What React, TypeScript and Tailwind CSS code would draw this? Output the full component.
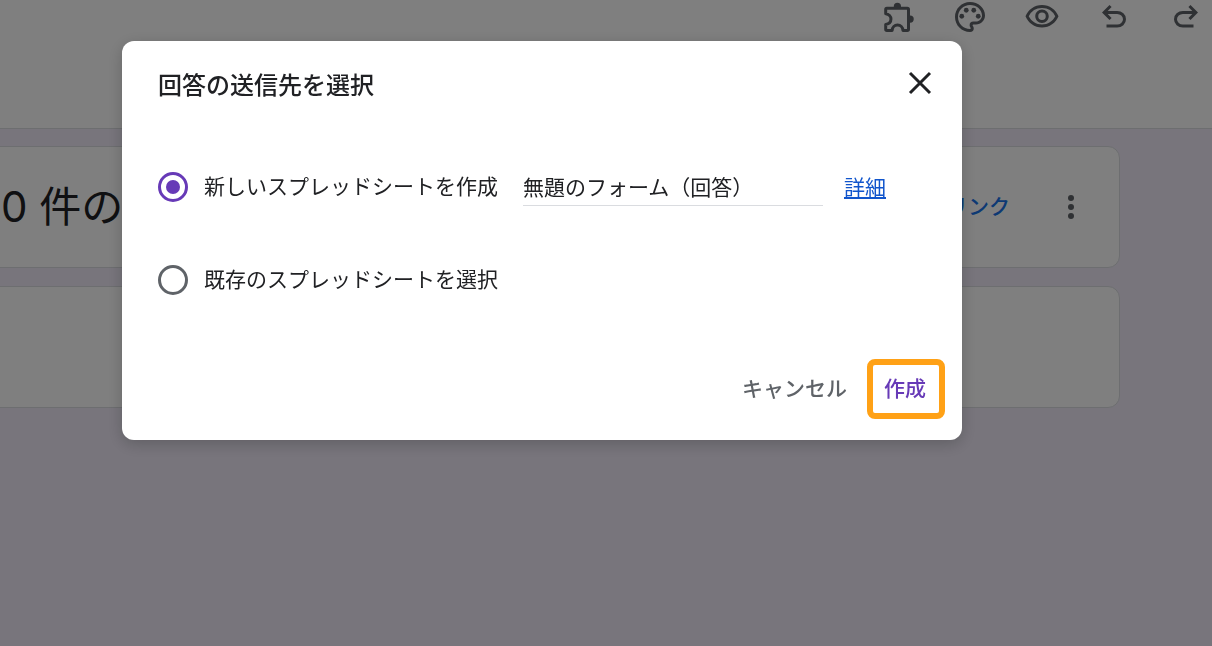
import { useState } from "react";
import type { ReactNode } from "react";
import { MdOutlineVisibility } from "react-icons/md";

export default function App() {
  return (
    <div className="relative min-h-screen overflow-hidden bg-[#f0ebf8] font-['Noto_Sans_CJK_JP',sans-serif] text-[#202124]">
      <Header />
      <main className="-ml-9 mr-[92px] flex flex-col gap-[18px] pt-[17px]">
        <section className="flex h-[122px] items-center rounded-xl border border-[#dadce0] bg-white pl-9 pr-[30px]">
          <h1 className="flex-1 font-[Inter,'Noto_Sans_CJK_JP',sans-serif] text-[42px] leading-[60px]">
            0 件の回答
          </h1>
          <button type="button" className="mr-[43px] pb-1 text-[21px] font-medium leading-8 text-[#1a73e8]">
            リンク
          </button>
          <IconButton label="その他">
            <svg viewBox="0 0 24 24" className="size-9" fill="currentColor">
              <circle cx="12" cy="6" r="2" />
              <circle cx="12" cy="12" r="2" />
              <circle cx="12" cy="18" r="2" />
            </svg>
          </IconButton>
        </section>
        <section className="h-[122px] rounded-xl border border-[#dadce0] bg-white" />
      </main>
      <div className="fixed inset-0 flex items-start justify-center bg-black/50 pr-32 pt-[41px]">
        <DestinationDialog />
      </div>
    </div>
  );
}

function Header() {
  return (
    <header className="h-[129px] border-b border-[#dadce0] bg-white">
      <div className="flex h-[34px] items-center justify-end gap-9 pr-2">
        <IconButton label="アドオン">
          <ExtensionIcon />
        </IconButton>
        <IconButton label="テーマをカスタマイズ">
          <PaletteIcon />
        </IconButton>
        <IconButton label="プレビュー">
          <MdOutlineVisibility className="size-9" />
        </IconButton>
        <IconButton label="元に戻す">
          <UndoIcon className="size-9" />
        </IconButton>
        <IconButton label="やり直す">
          <UndoIcon className="size-9 -scale-x-100" />
        </IconButton>
      </div>
    </header>
  );
}

function DestinationDialog() {
  const [target, setTarget] = useState("new");
  const [name, setName] = useState("無題のフォーム（回答）");

  return (
    <div
      role="dialog"
      aria-modal="true"
      aria-labelledby="dialog-title"
      className="w-full max-w-[840px] rounded-xl bg-white pb-[21px] pt-6 shadow-[0_4px_16px_rgba(0,0,0,0.2)]"
    >
      <div className="flex h-9 items-center justify-between pl-9 pr-6">
        <h2 id="dialog-title" className="pt-0.5 text-2xl font-medium">
          回答の送信先を選択
        </h2>
        <IconButton label="閉じる">
          <svg viewBox="0 0 36 36" className="size-9 text-[#202124]" stroke="currentColor" strokeWidth="3">
            <path d="M8 8l20 20M28 8L8 28" />
          </svg>
        </IconButton>
      </div>

      <div className="mt-[62px] flex h-12 items-center px-9">
        <Option
          value="new"
          label="新しいスプレッドシートを作成"
          checked={target === "new"}
          onChange={setTarget}
        />
        <input
          type="text"
          aria-label="スプレッドシートの名前"
          value={name}
          onChange={(e) => setName(e.target.value)}
          className="ml-[25px] h-[38px] w-[300px] border-b border-[#dadce0] pb-0.5 text-[21px] outline-none"
        />
        <a href="#details" className="ml-[21px] pb-0.5 text-[21px] leading-8 text-[#1155cc] underline">
          詳細
        </a>
      </div>

      <div className="mt-[45px] flex h-12 items-center px-9">
        <Option
          value="existing"
          label="既存のスプレッドシートを選択"
          checked={target === "existing"}
          onChange={setTarget}
        />
      </div>

      <div className="mt-[55px] flex items-center justify-end gap-5 pr-[17px] text-[21px] font-medium">
        <button type="button" className="h-[60px] pb-0.5 text-[#5f6368]">
          キャンセル
        </button>
        <button
          type="button"
          className="h-[60px] w-[78px] rounded-lg border-6 border-[#ffa116] pb-0.5 pr-0.5 text-[#673ab7]"
        >
          作成
        </button>
      </div>
    </div>
  );
}

function Option({
  value,
  label,
  checked,
  onChange,
}: {
  value: string;
  label: string;
  checked: boolean;
  onChange: (value: string) => void;
}) {
  return (
    <label className="flex items-center gap-4 text-[21px]">
      <input
        type="radio"
        name="target"
        value={value}
        checked={checked}
        onChange={() => onChange(value)}
        className="grid size-[30px] appearance-none place-items-center rounded-full border-3 border-[#5f6368] before:size-[14px] before:rounded-full checked:border-[#673ab7] checked:before:bg-[#673ab7]"
      />
      <span className="pb-0.5">{label}</span>
    </label>
  );
}

function IconButton({ label, children }: { label: string; children: ReactNode }) {
  return (
    <button type="button" aria-label={label} className="shrink-0 text-[#5f6368]">
      {children}
    </button>
  );
}

function ExtensionIcon() {
  return (
    <svg viewBox="0 0 24 24" className="size-9" fill="none" stroke="currentColor" strokeWidth="2">
      <path
        strokeLinejoin="round"
        d="M4.6 6.2H18.2Q19 6.2 19 7V20.2Q19 21 18.2 21H15.3C15.2 18.8 13.7 17.4 11.7 17.4S8.2 18.8 8.1 21H4.6Q3.8 21 3.8 20.2V17C5.9 16.7 7.3 15.3 7.3 13.4S5.9 10 3.8 9.8V7Q3.8 6.2 4.6 6.2z"
      />
      <path
        fill="currentColor"
        stroke="none"
        d="M9.2 5.5V4.9a2.4 2.4 0 0 1 4.8 0v.6zM19.5 11h.6a2.4 2.4 0 0 1 0 4.8h-.6z"
      />
    </svg>
  );
}

function PaletteIcon() {
  return (
    <svg viewBox="0 0 24 24" className="size-9" fill="currentColor">
      <path d="M12 22C6.49 22 2 17.51 2 12S6.49 2 12 2s10 4.04 10 9c0 3.31-2.69 6-6 6h-1.77c-.28 0-.5.22-.5.5 0 .12.05.23.13.33.41.47.64 1.06.64 1.67A2.5 2.5 0 0 1 12 22zm0-18c-4.41 0-8 3.59-8 8s3.59 8 8 8c.28 0 .5-.22.5-.5a.54.54 0 0 0-.14-.35c-.41-.46-.63-1.05-.63-1.65a2.5 2.5 0 0 1 2.5-2.5H16c2.21 0 4-1.79 4-4 0-3.86-3.59-7-8-7z" />
      <circle cx="6.5" cy="11.5" r="1.6" />
      <circle cx="9.5" cy="7.5" r="1.6" />
      <circle cx="14.5" cy="7.5" r="1.6" />
      <circle cx="17.5" cy="11.5" r="1.6" />
    </svg>
  );
}

function UndoIcon({ className }: { className: string }) {
  return (
    <svg viewBox="0 0 24 24" className={className} fill="currentColor">
      <path d="M7 19v-2h7.1q1.575 0 2.738-1T18 13.5 16.838 11 14.1 10H7.8l2.6 2.6L9 14 4 9l5-5 1.4 1.4L7.8 8h6.3q2.425 0 4.163 1.575T20 13.5t-1.737 3.925T14.1 19z" />
    </svg>
  );
}
